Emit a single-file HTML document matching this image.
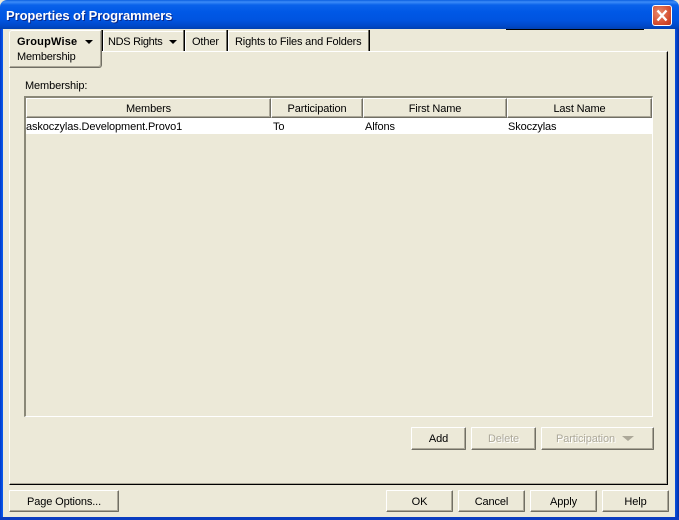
<!DOCTYPE html>
<html><head><meta charset="utf-8"><style>
html,body{margin:0;padding:0;width:679px;height:520px;overflow:hidden;background:#ece9d8}
*{box-sizing:border-box}
div{position:absolute}
.t{font:11px/13px "Liberation Sans",sans-serif;letter-spacing:-.12px;color:#000;white-space:nowrap}
.btn{background:#ece9d8;border-top:1px solid #fff;border-left:1px solid #fff;border-right:1px solid #716f64;border-bottom:1px solid #716f64;box-shadow:inset -1px -1px 0 #aca899;border-radius:1px;font:11px/13px "Liberation Sans",sans-serif;letter-spacing:-.12px;text-align:center;color:#000;white-space:nowrap}
.btn span{position:relative;top:5px}
.dis{color:#aca899;text-shadow:1px 1px 0 #fff}
.hd{background:#ece9d8;top:98px;height:20px;border-top:1px solid #fff;border-left:1px solid #fff;border-right:1px solid #716f64;border-bottom:1px solid #716f64;box-shadow:inset -1px -1px 0 #aca899;font:11px/20px "Liberation Sans",sans-serif;letter-spacing:-.12px;text-align:center;white-space:nowrap}
.tab{top:31px;height:20px;background:#ece9d8;border-top:1px solid #fff;border-left:1px solid #fff}
.sep{top:30px;height:21px;width:2px;background:linear-gradient(90deg,#716f64 50%,#000 50%)}
.arr{width:0;height:0;border-left:4px solid transparent;border-right:4px solid transparent;border-top:4px solid #000}
</style></head><body>
<div style="left:0;top:0;width:679px;height:29px;background:linear-gradient(180deg,#0a5fe0 0,#3c8cf8 2px,#0a62ea 5px,#0058e6 12px,#0054e0 20px,#0048c8 26px,#0040b0 29px);border-radius:7px 7px 0 0"></div>
<div style="left:0;top:29px;width:3px;height:491px;background:linear-gradient(90deg,#0038c8,#0a5cf0)"></div>
<div style="left:675px;top:29px;width:4px;height:491px;background:linear-gradient(90deg,#0a50e0,#0030a8)"></div>
<div style="left:0;top:517px;width:679px;height:3px;background:#0a3cc0"></div>
<div class="t" style="left:6px;top:8px;font-size:13px;line-height:16px;font-weight:bold;color:#fff;text-shadow:1px 1px 0 #0a2a8c;letter-spacing:-.08px">Properties of Programmers</div>
<div style="left:652px;top:5px;width:20px;height:21px;background:radial-gradient(circle at 35% 35%,#e88a6c,#d2482a 70%,#b8351c);border:1px solid #fff;border-radius:3px"></div>
<svg style="position:absolute;left:652px;top:5px" width="20" height="21" viewBox="0 0 20 21"><path d="M5.5 5.5L14.5 15.5M14.5 5.5L5.5 15.5" stroke="#fff" stroke-width="2.4" fill="none"/></svg>
<div style="left:506px;top:29px;width:138px;height:1px;background:#000"></div>

<!-- main panel -->
<div style="left:9px;top:51px;width:659px;height:434px;background:#ece9d8;border-top:1px solid #fff;border-left:1px solid #fff;border-right:1px solid #000;border-bottom:1px solid #000"></div>
<div style="left:10px;top:483px;width:657px;height:1px;background:#aca899"></div>
<div style="left:666px;top:52px;width:1px;height:432px;background:#aca899"></div>

<!-- tabs -->
<div class="tab" style="left:103px;width:80px"></div>
<div class="tab" style="left:185px;width:41px"></div>
<div class="tab" style="left:228px;width:140px"></div>
<div class="sep" style="left:183px"></div>
<div class="sep" style="left:226px"></div>
<div class="sep" style="left:368px"></div>
<div class="t" style="left:108px;top:36px;letter-spacing:-.3px">NDS Rights</div>
<div class="arr" style="left:169px;top:40px"></div>
<div class="t" style="left:192px;top:36px">Other</div>
<div class="t" style="left:235px;top:36px;letter-spacing:-.16px">Rights to Files and Folders</div>

<div style="left:9px;top:30px;width:93px;height:38px;background:#ece9d8;border-top:1px solid #fff;border-left:1px solid #fff;border-right:1px solid #716f64;border-bottom:1px solid #716f64;box-shadow:inset -1px -1px 0 #aca899;border-radius:3px 3px 3px 0"></div>
<div class="sep" style="left:101px;height:21px"></div>
<div class="t" style="left:17px;top:36px;font-weight:bold;letter-spacing:.2px">GroupWise</div>
<div class="arr" style="left:85px;top:40px"></div>
<div class="t" style="left:17px;top:51px;letter-spacing:-.2px">Membership</div>

<div class="t" style="left:25px;top:80px">Membership:</div>

<!-- table -->
<div style="left:24px;top:96px;width:629px;height:321px;border-top:2px solid #8a8878;border-left:2px solid #8a8878;border-right:1px solid #fff;border-bottom:1px solid #fff"></div>
<div class="hd" style="left:26px;width:245px">Members</div>
<div class="hd" style="left:271px;width:92px">Participation</div>
<div class="hd" style="left:363px;width:144px">First Name</div>
<div class="hd" style="left:507px;width:145px">Last Name</div>
<div style="left:26px;top:118px;width:626px;height:16px;background:#fff"></div>
<div class="t" style="left:26px;top:121px">askoczylas.Development.Provo1</div>
<div class="t" style="left:273px;top:121px">To</div>
<div class="t" style="left:365px;top:121px">Alfons</div>
<div class="t" style="left:508px;top:121px">Skoczylas</div>

<!-- action buttons -->
<div class="btn" style="left:411px;top:427px;width:55px;height:23px"><span>Add</span></div>
<div class="btn dis" style="left:471px;top:427px;width:65px;height:23px"><span>Delete</span></div>
<div class="btn dis" style="left:541px;top:427px;width:113px;height:23px;text-align:left;padding-left:14px"><span>Participation</span></div>
<div class="arr" style="left:622px;top:436px;border-left-width:6px;border-right-width:6px;border-top:5px solid #aca899"></div>

<!-- bottom buttons -->
<div class="btn" style="left:9px;top:490px;width:110px;height:22px"><span>Page Options...</span></div>
<div class="btn" style="left:386px;top:490px;width:67px;height:22px"><span>OK</span></div>
<div class="btn" style="left:458px;top:490px;width:67px;height:22px"><span>Cancel</span></div>
<div class="btn" style="left:530px;top:490px;width:67px;height:22px"><span>Apply</span></div>
<div class="btn" style="left:602px;top:490px;width:67px;height:22px"><span>Help</span></div>
</body></html>
